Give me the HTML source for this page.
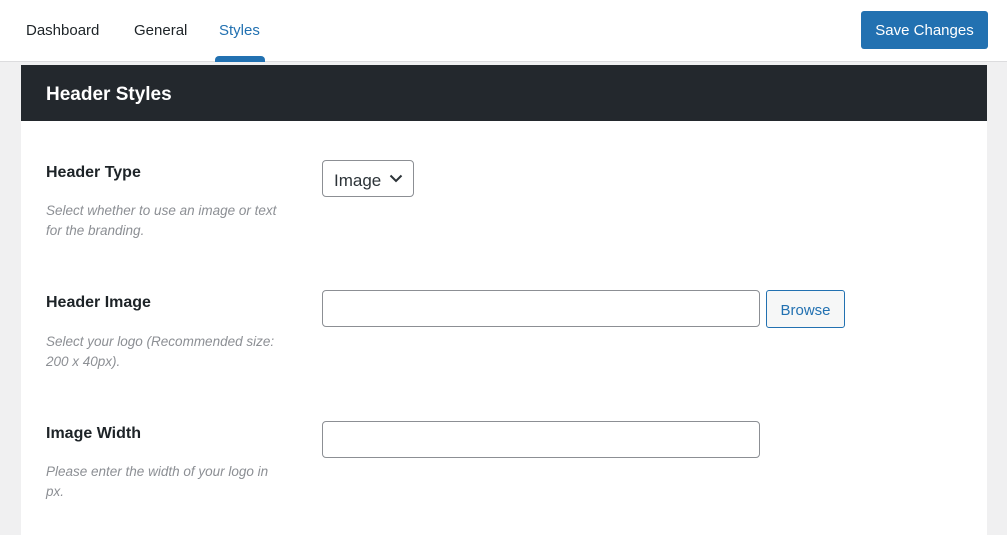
<!DOCTYPE html>
<html><head><style>
*{box-sizing:border-box;margin:0;padding:0}
body{width:1007px;height:535px;overflow:hidden;background:#f0f0f1;font-family:"Liberation Sans",sans-serif;position:relative}
.top{position:absolute;left:0;top:0;width:1007px;height:62px;background:#fff;border-bottom:1px solid #dcdcde}
.tab{position:absolute;top:22px;font-size:15px;color:#1d2327}
.ul{position:absolute;left:215px;top:56px;width:50px;height:6px;background:#2271b1;border-radius:4px 4px 0 0}
.save{position:absolute;left:861px;top:11px;width:127px;height:38px;background:#2271b1;border-radius:3px;color:#fff;font-size:15px;text-align:center;line-height:40px}
.panel{position:absolute;left:21px;top:65px;width:966px;height:470px;background:#fff}
.hd{height:56px;background:#23282d;color:#fff;font-weight:bold;font-size:19px;padding:19px 0 0 25px}
.lbl{position:absolute;left:46px;font-weight:bold;font-size:16px;color:#1d2327}
.desc{position:absolute;left:46px;font-style:italic;font-size:13.5px;color:#8c8f94;line-height:20px;width:240px}
.inp{position:absolute;left:322px;width:438px;height:37px;border:1px solid #8c8f94;border-radius:4px;background:#fff}
</style></head><body>
<div class="top">
<span class="tab" style="left:26px">Dashboard</span>
<span class="tab" style="left:134px">General</span>
<span class="tab" style="left:219px;color:#2271b1">Styles</span>
<div class="ul"></div>
<div class="save">Save Changes</div>
</div>
<div class="panel"><div class="hd">Header Styles</div></div>
<div class="lbl" style="top:164px">Header Type</div>
<div class="desc" style="top:201px">Select whether to use an image or text for the branding.</div>
<div style="position:absolute;left:322px;top:160px;width:92px;height:37px;border:1px solid #8c8f94;border-radius:4px;font-size:17px;color:#2c3338;padding:10px 0 0 11px">Image
<svg style="position:absolute;left:66px;top:13px" width="14" height="9" viewBox="0 0 14 9"><path d="M1.5 1.5 7 7l5.5-5.5" fill="none" stroke="#2c3338" stroke-width="2"/></svg></div>
<div class="lbl" style="top:294px">Header Image</div>
<div class="desc" style="top:332px">Select your logo (Recommended size: 200 x 40px).</div>
<div class="inp" style="top:290px"></div>
<div style="position:absolute;left:766px;top:290px;width:79px;height:38px;border:1px solid #2271b1;border-radius:3px;background:#f6f7f7;color:#2271b1;font-size:15px;text-align:center;line-height:40px">Browse</div>
<div class="lbl" style="top:425px">Image Width</div>
<div class="desc" style="top:462px">Please enter the width of your logo in px.</div>
<div class="inp" style="top:421px"></div>
</body></html>
